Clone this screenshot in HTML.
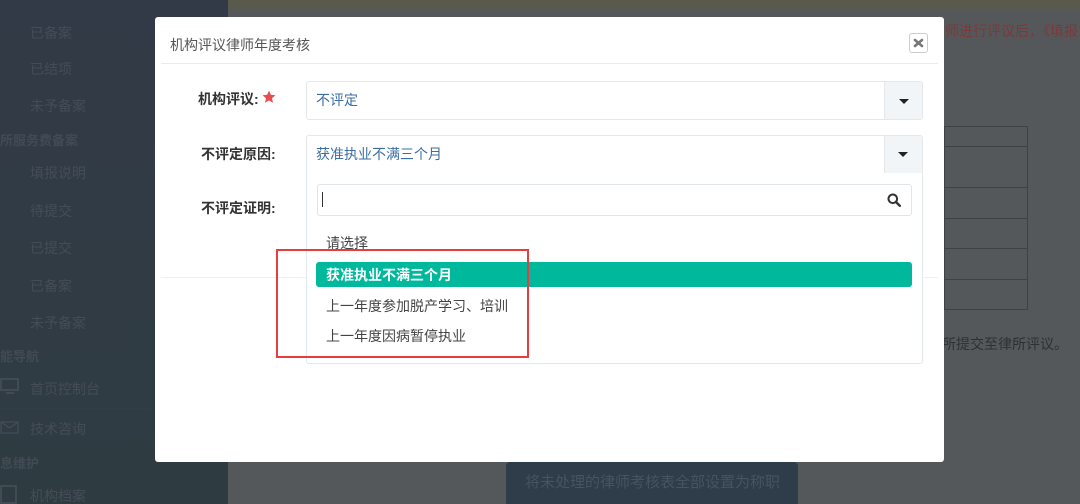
<!DOCTYPE html>
<html><head><meta charset="utf-8">
<style>
*{margin:0;padding:0;box-sizing:border-box}
html,body{width:1080px;height:504px;overflow:hidden}
body{position:relative;background:#55585b;font-family:"Liberation Sans","Noto Sans CJK SC",sans-serif;}
.abs{position:absolute}
.side{left:0;top:0;width:228px;height:504px;background:linear-gradient(#333a47,#2e3c42)}
.side div{position:absolute;font-size:14px;color:#454c57;white-space:nowrap}
.side .h{font-weight:bold;color:#424a54;font-size:13px}
.modal{left:155px;top:17px;width:789px;height:445px;background:#fff;border-radius:3px}
.lbl{position:absolute;font-size:14px;font-weight:bold;color:#333;white-space:nowrap}
.sel{position:absolute;border:1px solid #e3e8ec;border-radius:3px;background:#fff}
.arr{position:absolute;right:0;top:0;width:38px;height:100%;background:#f2f5f7;border-left:1px solid #e3e8ec}
.arr:after{content:"";position:absolute;left:14px;top:50%;margin-top:-2px;border-left:5px solid transparent;border-right:5px solid transparent;border-top:5px solid #222}
.txt{position:absolute;font-size:14px;color:#3a6ea5;white-space:nowrap}
.opt{position:absolute;font-size:14px;color:#444;white-space:nowrap}
</style></head><body>
<div class="abs" style="left:228px;top:0;width:852px;height:10px;background:#5a5a4c"></div>
<div class="abs" style="left:945px;top:21px;font-size:14px;color:#7a3a3a;white-space:nowrap">师进行评议后，《填报</div>
<div class="abs" style="left:944px;top:126px;width:84px;height:184px;border:1px solid #3f4245"></div>
<div class="abs" style="left:944px;top:146px;width:84px;height:1px;background:#3f4245"></div>
<div class="abs" style="left:944px;top:187px;width:84px;height:1px;background:#3f4245"></div>
<div class="abs" style="left:944px;top:218px;width:84px;height:1px;background:#3f4245"></div>
<div class="abs" style="left:944px;top:248px;width:84px;height:1px;background:#3f4245"></div>
<div class="abs" style="left:944px;top:279px;width:84px;height:1px;background:#3f4245"></div>
<div class="abs" style="left:942px;top:334px;font-size:14px;color:#2e3033;white-space:nowrap">所提交至律所评议。</div>
<div class="abs" style="left:506px;top:462px;width:292px;height:42px;background:#2f3d4b;border-radius:4px 4px 0 0;color:#465361;font-size:15px;padding:9px 0 0 19px;white-space:nowrap">将未处理的律师考核表全部设置为称职</div>

<div class="abs side">
<div style="left:30px;top:23px">已备案</div>
<div style="left:30px;top:59px">已结项</div>
<div style="left:30px;top:96px">未予备案</div>
<div class="h" style="left:0;top:130px">所服务费备案</div>
<div style="left:30px;top:163px">填报说明</div>
<div style="left:30px;top:201px">待提交</div>
<div style="left:30px;top:238px">已提交</div>
<div style="left:30px;top:276px">已备案</div>
<div style="left:30px;top:313px">未予备案</div>
<div class="h" style="left:0;top:346px">能导航</div>
<svg style="position:absolute;left:0;top:378px" width="20" height="18"><rect x="1" y="1" width="17" height="11" fill="none" stroke="#424a54" stroke-width="2"/><rect x="6" y="14" width="8" height="2" fill="#424a54"/></svg>
<div style="left:30px;top:379px">首页控制台</div>
<div class="abs" style="left:0;top:408px;width:150px;height:1px;background:#333d46"></div>
<svg style="position:absolute;left:0;top:421px" width="20" height="14"><rect x="1" y="1" width="17" height="11" fill="none" stroke="#424a54" stroke-width="1.5"/><path d="M1 1l8.5 6 8.5-6" fill="none" stroke="#424a54" stroke-width="1.5"/></svg>
<div style="left:30px;top:419px">技术咨询</div>
<div class="h" style="left:0;top:453px">息维护</div>
<svg style="position:absolute;left:0;top:485px" width="18" height="19"><rect x="1" y="1" width="15" height="17" fill="none" stroke="#424a54" stroke-width="2"/></svg>
<div style="left:30px;top:486px">机构档案</div>
</div>

<div class="abs modal"></div>
<div class="abs" style="left:170px;top:35px;font-size:14px;color:#555;white-space:nowrap">机构评议律师年度考核</div>
<div class="abs" style="left:909px;top:33px;width:19px;height:20px;border:1px solid #ccc;border-radius:3px;background:#fff;"></div>
<svg style="position:absolute;left:913px;top:38px" width="11" height="10"><path d="M2 2l7 6M9 2l-7 6" stroke="#777" stroke-width="2.6" stroke-linecap="round"/></svg>
<div class="abs" style="left:161px;top:63px;width:777px;height:1px;background:#e8ecef"></div>
<div class="abs" style="left:161px;top:277px;width:777px;height:1px;background:#eef1f3"></div>

<div class="lbl" style="left:198px;top:89px">机构评议:</div>
<svg style="position:absolute;left:262px;top:90px" width="14" height="14" viewBox="0 0 24 24"><path d="M12 1l3.2 7.2 7.8.7-5.9 5.2 1.8 7.7L12 17.8 5.1 21.8l1.8-7.7L1 8.9l7.8-.7z" fill="#e84c4c"/></svg>
<div class="sel" style="left:306px;top:81px;width:617px;height:39px"><div class="arr"></div></div>
<div class="txt" style="left:316px;top:90px">不评定</div>

<div class="lbl" style="left:201px;top:144px">不评定原因:</div>
<div class="sel" style="left:306px;top:135px;width:617px;height:229px"></div>
<div class="abs" style="left:884px;top:136px;width:38px;height:37px;background:#f2f5f7;border-left:1px solid #e3e8ec"></div>
<div class="abs" style="left:898px;top:152px;border-left:5px solid transparent;border-right:5px solid transparent;border-top:5px solid #222"></div>
<div class="txt" style="left:316px;top:144px">获准执业不满三个月</div>

<div class="lbl" style="left:201px;top:198px">不评定证明:</div>
<div class="abs" style="left:317px;top:184px;width:595px;height:32px;border:1px solid #e0e5e9;border-radius:3px;background:#fff"></div>
<div class="abs" style="left:322px;top:192px;width:1px;height:15px;background:#333"></div>
<svg style="position:absolute;left:887px;top:193px" width="14" height="14" viewBox="0 0 14 14"><circle cx="5.8" cy="5.8" r="4.3" fill="none" stroke="#333" stroke-width="2"/><path d="M9 9l3.8 3.8" stroke="#333" stroke-width="2.4" stroke-linecap="round"/></svg>

<div class="opt" style="left:326px;top:233px">请选择</div>
<div class="abs" style="left:316px;top:262px;width:596px;height:25px;background:#00b89c;border-radius:3px"></div>
<div class="opt" style="left:326px;top:265px;color:#fff;font-weight:bold">获准执业不满三个月</div>
<div class="opt" style="left:326px;top:296px">上一年度参加脱产学习、培训</div>
<div class="opt" style="left:326px;top:326px">上一年度因病暂停执业</div>

<div class="abs" style="left:276px;top:249px;width:253px;height:109px;border:2px solid #e53e3e"></div>
</body></html>
